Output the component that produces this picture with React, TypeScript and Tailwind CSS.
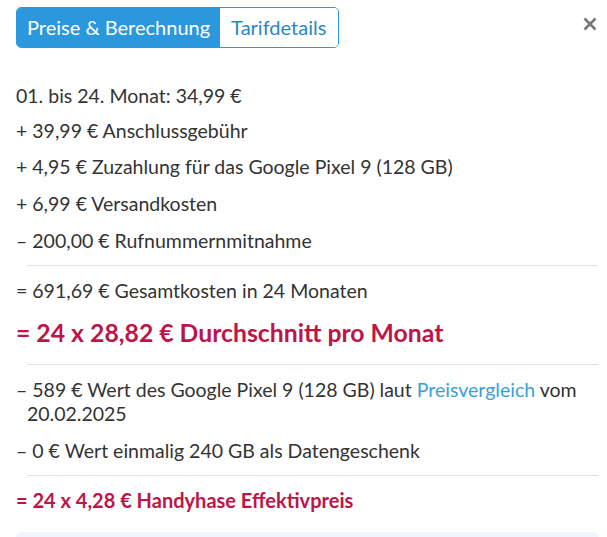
import React from "react";

const Row = ({ children, className = "" }: { children: React.ReactNode; className?: string }) => (
  <p className={"pl-[11px] -indent-[11px] text-[19.5px] leading-[24px] text-[#333333] " + className}>{children}</p>
);

export default function App() {
  return (
    <div className="w-[607px] h-[537px] overflow-hidden bg-white px-4 pt-[7px]" style={{ fontFamily: "Lato, 'Open Sans', sans-serif" }}>
      <div className="flex items-start justify-between">
        <div className="flex h-[41px] rounded-[5px] border border-[#2b98dd] overflow-hidden">
          <button className="bg-[#2b98dd] text-white text-[20px] px-[10px] leading-[39px]">Preise &amp; Berechnung</button>
          <button className="bg-white text-[#2b86c5] text-[20px] pl-[11px] pr-[12px] leading-[39px]">Tarifdetails</button>
        </div>
        <svg width="16" height="16" viewBox="0 0 16 16" className="mt-[9px] mr-[-7px]">
          <path d="M2.5 2.5L13.5 13.5M13.5 2.5L2.5 13.5" stroke="#777" strokeWidth="2.6" strokeLinecap="butt" />
        </svg>
      </div>

      <div className="mt-[36px] flex flex-col">
        <Row>01. bis 24. Monat: 34,99 €</Row>
        <Row className="mt-[11px]">+ 39,99 € Anschlussgebühr</Row>
        <Row className="mt-[12px]">+ 4,95 € Zuzahlung für das Google Pixel 9 (128 GB)</Row>
        <Row className="mt-[13px]">+ 6,99 € Versandkosten</Row>
        <Row className="mt-[13px]">– 200,00 € Rufnummernmitnahme</Row>
        <div className="ml-[11px] mr-[-7px] mt-[12px] border-t border-[#e2e2e2]" />
        <Row className="mt-[13px]">= 691,69 € Gesamtkosten in 24 Monaten</Row>
        <p className="mt-[14px] text-[24.75px] leading-[32px] font-bold text-[#bd1547]">= 24 x 28,82 € Durchschnitt pro Monat</p>
        <div className="ml-[11px] mr-[-7px] mt-[15px] border-t border-[#e2e2e2]" />
        <Row className="mt-[13px]">
          – 589 € Wert des Google Pixel 9 (128 GB) laut <span className="text-[#3a9fd6]">Preisvergleich</span> vom 20.02.2025
        </Row>
        <Row className="mt-[13px]">– 0 € Wert einmalig 240 GB als Datengeschenk</Row>
        <div className="ml-[11px] mr-[-7px] mt-[12px] border-t border-[#e2e2e2]" />
        <p className="mt-[10px] text-[20px] leading-[28px] font-bold text-[#bd1547]">= 24 x 4,28 € Handyhase Effektivpreis</p>
        <div className="mt-[18px] h-[20px] rounded-[5px] bg-[#f0f7fc] mr-[-7px]" />
      </div>
    </div>
  );
}
